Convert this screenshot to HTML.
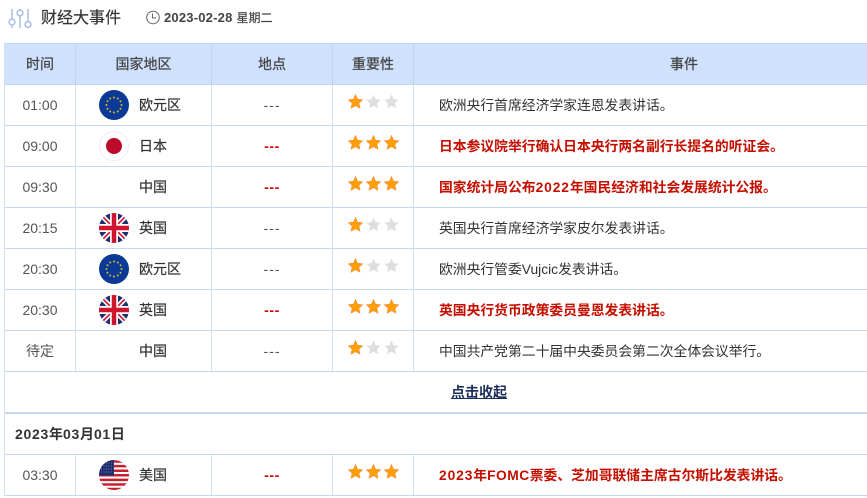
<!DOCTYPE html>
<html lang="zh"><head><meta charset="utf-8"><style>
html,body{margin:0;padding:0;background:#fff}
body{width:867px;height:498px;overflow:hidden;position:relative;font-family:"Liberation Sans","Noto Sans CJK SC",sans-serif;color:#333;font-size:14px}
.a{position:absolute;white-space:nowrap}
.h{position:absolute;background:#c5d7f2}
.v{position:absolute;width:1px;background:#d3e0f5}
.c{text-align:center;line-height:20px;height:20px}
.th{font-size:14px;color:#444;-webkit-text-stroke:.25px #444}
.ev{font-size:13.800px;color:#333;left:439px;line-height:20px;margin-top:1px}
.ev.red{color:#c40f00;font-weight:bold}
.d{letter-spacing:.7px}
.d2{letter-spacing:.9px}
.cn{left:139px;font-size:14px;color:#333;line-height:20px;-webkit-text-stroke:.2px #333}
.t{left:5px;width:70px;color:#555;font-size:14px}
.p{left:212px;width:120px;color:#555;letter-spacing:1px}
.pr{left:212px;width:120px;color:#d00000;font-weight:bold;letter-spacing:.6px}
svg{position:absolute;display:block}
</style></head><body>
<svg style="left:8px;top:8px" width="24" height="21" viewBox="0 0 24 21" fill="none" stroke="#a9bfe6" stroke-width="1.500"><path d="M4 1v10M4 17v3M12 1v1M12 8v12M20 1v13M20 19v1"/><circle cx="4" cy="14" r="2.900"/><circle cx="12" cy="5" r="2.900"/><circle cx="20" cy="16.500" r="2.900"/></svg>
<div class="a" style="left:41px;top:8px;font-size:16px;line-height:22px;color:#333;-webkit-text-stroke:.2px #333">财经大事件</div>
<svg style="left:146px;top:10px" width="14" height="15" viewBox="0 0 14 15" fill="none" stroke="#666" stroke-width="1"><circle cx="7" cy="7.500" r="6.300"/><path d="M6.500 3.500v4.500h3.500"/></svg>
<div class="a" style="left:164px;top:9px;font-size:13px;line-height:18px;font-weight:bold;color:#444"><span style="letter-spacing:.2px">2023-02-28</span><span style="display:inline-block;width:4px"></span><span style="font-weight:normal;font-size:12px;-webkit-text-stroke:.2px #444">星期二</span></div>

<div class="a" style="left:4px;top:44px;width:863px;height:40px;background:#cfe1fd"></div>
<div class="h" style="left:4px;top:43px;width:863px;height:1px"></div>
<div class="h" style="left:4px;top:84px;width:863px;height:1px"></div>
<div class="h" style="left:4px;top:125px;width:863px;height:1px"></div>
<div class="h" style="left:4px;top:166px;width:863px;height:1px"></div>
<div class="h" style="left:4px;top:207px;width:863px;height:1px"></div>
<div class="h" style="left:4px;top:248px;width:863px;height:1px"></div>
<div class="h" style="left:4px;top:289px;width:863px;height:1px"></div>
<div class="h" style="left:4px;top:330px;width:863px;height:1px"></div>
<div class="h" style="left:4px;top:371px;width:863px;height:1px"></div>
<div class="h" style="left:4px;top:412px;width:863px;height:2px"></div>
<div class="h" style="left:4px;top:454px;width:863px;height:1px"></div>
<div class="h" style="left:4px;top:495px;width:863px;height:1px"></div>

<div class="v" style="left:4px;top:44px;height:452px"></div>
<div class="v" style="left:75px;top:44px;height:40px;background:#c0d4f2"></div>
<div class="v" style="left:211px;top:44px;height:40px;background:#c0d4f2"></div>
<div class="v" style="left:332px;top:44px;height:40px;background:#c0d4f2"></div>
<div class="v" style="left:413px;top:44px;height:40px;background:#c0d4f2"></div>
<div class="v" style="left:75px;top:85px;height:286px"></div>
<div class="v" style="left:211px;top:85px;height:286px"></div>
<div class="v" style="left:332px;top:85px;height:286px"></div>
<div class="v" style="left:413px;top:85px;height:286px"></div>
<div class="v" style="left:75px;top:455px;height:40px"></div>
<div class="v" style="left:211px;top:455px;height:40px"></div>
<div class="v" style="left:332px;top:455px;height:40px"></div>
<div class="v" style="left:413px;top:455px;height:40px"></div>

<div class="a c th" style="left:5px;width:70px;top:54px">时间</div>
<div class="a c th" style="left:76px;width:135px;top:54px">国家地区</div>
<div class="a c th" style="left:212px;width:120px;top:54px">地点</div>
<div class="a c th" style="left:333px;width:80px;top:54px">重要性</div>
<div class="a c th" style="left:414px;top:54px;width:540px">事件</div>

<svg width="0" height="0" style="position:absolute"><defs>
<clipPath id="cc"><circle cx="15" cy="15" r="15"/></clipPath>
<polygon id="s" points="7.500,0.500 9.600,5.200 14.700,5.800 10.900,9.200 12,14.200 7.500,11.700 3,14.200 4.100,9.200 0.300,5.800 5.400,5.200"/>
<g id="eu"><circle cx="15" cy="15" r="15" fill="#0a3a96"/><g fill="#d7b62a"><circle cx="15" cy="7.500" r="1"/><circle cx="18.800" cy="8.500" r="1"/><circle cx="21.500" cy="11.200" r="1"/><circle cx="22.500" cy="15" r="1"/><circle cx="21.500" cy="18.800" r="1"/><circle cx="18.800" cy="21.500" r="1"/><circle cx="15" cy="22.500" r="1"/><circle cx="11.200" cy="21.500" r="1"/><circle cx="8.500" cy="18.800" r="1"/><circle cx="7.500" cy="15" r="1"/><circle cx="8.500" cy="11.200" r="1"/><circle cx="11.200" cy="8.500" r="1"/></g></g>
<g id="uk" clip-path="url(#cc)"><rect width="30" height="30" fill="#1d2f6f"/><path d="M0 0L30 30M30 0L0 30" stroke="#fff" stroke-width="5"/><path d="M0 0L30 30M30 0L0 30" stroke="#d0142c" stroke-width="1.600"/><path d="M15 0V30M0 15H30" stroke="#fff" stroke-width="8"/><path d="M15 0V30M0 15H30" stroke="#d0142c" stroke-width="4.500"/></g>
</defs></svg>

<!-- stars -->
<svg style="left:348px;top:94px" width="52" height="15"><use href="#s" fill="#fd9f05" stroke="#f88a3a" stroke-width=".6"/><use href="#s" x="18" fill="#dedede"/><use href="#s" x="36" fill="#dedede"/></svg>
<svg style="left:348px;top:135px" width="52" height="15"><use href="#s" fill="#fd9f05" stroke="#f88a3a" stroke-width=".6"/><use href="#s" x="18" fill="#fd9f05" stroke="#f88a3a" stroke-width=".6"/><use href="#s" x="36" fill="#fd9f05" stroke="#f88a3a" stroke-width=".6"/></svg>
<svg style="left:348px;top:176px" width="52" height="15"><use href="#s" fill="#fd9f05" stroke="#f88a3a" stroke-width=".6"/><use href="#s" x="18" fill="#fd9f05" stroke="#f88a3a" stroke-width=".6"/><use href="#s" x="36" fill="#fd9f05" stroke="#f88a3a" stroke-width=".6"/></svg>
<svg style="left:348px;top:217px" width="52" height="15"><use href="#s" fill="#fd9f05" stroke="#f88a3a" stroke-width=".6"/><use href="#s" x="18" fill="#dedede"/><use href="#s" x="36" fill="#dedede"/></svg>
<svg style="left:348px;top:258px" width="52" height="15"><use href="#s" fill="#fd9f05" stroke="#f88a3a" stroke-width=".6"/><use href="#s" x="18" fill="#dedede"/><use href="#s" x="36" fill="#dedede"/></svg>
<svg style="left:348px;top:299px" width="52" height="15"><use href="#s" fill="#fd9f05" stroke="#f88a3a" stroke-width=".6"/><use href="#s" x="18" fill="#fd9f05" stroke="#f88a3a" stroke-width=".6"/><use href="#s" x="36" fill="#fd9f05" stroke="#f88a3a" stroke-width=".6"/></svg>
<svg style="left:348px;top:340px" width="52" height="15"><use href="#s" fill="#fd9f05" stroke="#f88a3a" stroke-width=".6"/><use href="#s" x="18" fill="#dedede"/><use href="#s" x="36" fill="#dedede"/></svg>
<svg style="left:348px;top:464px" width="52" height="15"><use href="#s" fill="#fd9f05" stroke="#f88a3a" stroke-width=".6"/><use href="#s" x="18" fill="#fd9f05" stroke="#f88a3a" stroke-width=".6"/><use href="#s" x="36" fill="#fd9f05" stroke="#f88a3a" stroke-width=".6"/></svg>

<!-- flags -->
<svg style="left:99px;top:90px" width="30" height="30"><use href="#eu"/></svg>
<svg style="left:99px;top:131px" width="30" height="30"><circle cx="15" cy="15" r="14.500" fill="#fff" stroke="#eee"/><circle cx="15" cy="15" r="8" fill="#bc0a2c"/></svg>
<svg style="left:99px;top:213px" width="30" height="30"><use href="#uk"/></svg>
<svg style="left:99px;top:254px" width="30" height="30"><use href="#eu"/></svg>
<svg style="left:99px;top:295px" width="30" height="30"><use href="#uk"/></svg>
<svg style="left:99px;top:460px" width="30" height="30"><g clip-path="url(#cc)"><rect width="30" height="30" fill="#fff"/><path d="M0 1.500H30M0 6.100H30M0 10.700H30M0 15.300H30M0 19.900H30M0 24.500H30M0 29H30" stroke="#c8202f" stroke-width="2.500"/><rect width="15" height="15.500" fill="#1d2f6f"/><path d="M2 3H15M2 6H15M2 9H15M2 12H15" stroke="#8f9bc4" stroke-width=".8" stroke-dasharray="1 1.500"/></g></svg>

<!-- rows -->
<div class="a c t" style="top:95px">01:00</div><div class="a cn" style="top:95px">欧元区</div><div class="a c p" style="top:95px">---</div><div class="a ev" style="top:95px">欧洲央行首席经济学家连恩发表讲话。</div>
<div class="a c t" style="top:136px">09:00</div><div class="a cn" style="top:136px">日本</div><div class="a c pr" style="top:136px">---</div><div class="a ev red" style="top:136px">日本参议院举行确认日本央行两名副行长提名的听证会。</div>
<div class="a c t" style="top:177px">09:30</div><div class="a cn" style="top:177px">中国</div><div class="a c pr" style="top:177px">---</div><div class="a ev red" style="top:177px">国家统计局公布<span class="d2">2022</span>年国民经济和社会发展统计公报。</div>
<div class="a c t" style="top:218px">20:15</div><div class="a cn" style="top:218px">英国</div><div class="a c p" style="top:218px">---</div><div class="a ev" style="top:218px">英国央行首席经济学家皮尔发表讲话。</div>
<div class="a c t" style="top:259px">20:30</div><div class="a cn" style="top:259px">欧元区</div><div class="a c p" style="top:259px">---</div><div class="a ev" style="top:259px">欧洲央行管委Vujcic发表讲话。</div>
<div class="a c t" style="top:300px">20:30</div><div class="a cn" style="top:300px">英国</div><div class="a c pr" style="top:300px">---</div><div class="a ev red" style="top:300px">英国央行货币政策委员曼恩发表讲话。</div>
<div class="a c t" style="top:341px">待定</div><div class="a cn" style="top:341px">中国</div><div class="a c p" style="top:341px">---</div><div class="a ev" style="top:341px">中国共产党第二十届中央委员会第二次全体会议举行。</div>

<div class="a" style="left:451px;top:382px;font-size:14px;line-height:20px;font-weight:bold;color:#1c2f5c;text-decoration:underline">点击收起</div>
<div class="a" style="left:15px;top:424px;font-size:14px;line-height:20px;font-weight:bold;color:#333"><span class="d">2023</span>年<span class="d">03</span>月<span class="d">01</span>日</div>

<div class="a c t" style="top:465px">03:30</div><div class="a cn" style="top:465px">美国</div><div class="a c pr" style="top:465px">---</div><div class="a ev red" style="top:465px"><span class="d2">2023</span>年<span style="letter-spacing:.5px">FOMC</span>票委、芝加哥联储主席古尔斯比发表讲话。</div>
</body></html>
